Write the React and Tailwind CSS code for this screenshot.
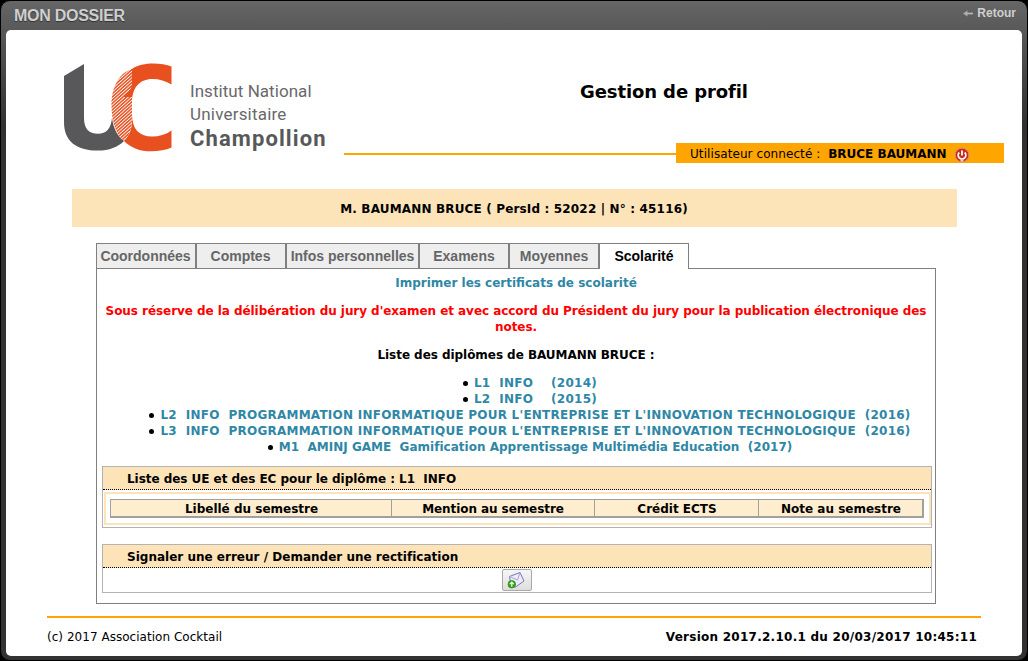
import React from "react";

const tabs = [
  { label: "Coordonnées", cls: "w-[100px] pr-px" },
  { label: "Comptes", cls: "w-[90px] pr-px" },
  { label: "Infos personnelles", cls: "w-[133px]" },
  { label: "Examens", cls: "w-[90px]" },
  { label: "Moyennes", cls: "w-[90px]" },
];

const diplomas = [
  { text: "L1  INFO    (2014)", cls: "tracking-[0.27px]" },
  { text: "L2  INFO    (2015)", cls: "tracking-[0.27px]" },
  { text: "L2  INFO  PROGRAMMATION INFORMATIQUE POUR L'ENTREPRISE ET L'INNOVATION TECHNOLOGIQUE  (2016)", cls: "tracking-[0.24px]" },
  { text: "L3  INFO  PROGRAMMATION INFORMATIQUE POUR L'ENTREPRISE ET L'INNOVATION TECHNOLOGIQUE  (2016)", cls: "tracking-[0.24px]" },
  { text: "M1  AMINJ GAME  Gamification Apprentissage Multimédia Education  (2017)", cls: "tracking-[0.01px]" },
];

function Logo() {
  return (
    <svg className="h-[90px] w-[110px] shrink-0" viewBox="63 63 110 90">
      <defs>
        <pattern id="hatch" width="2.4" height="2.4" patternUnits="userSpaceOnUse" patternTransform="rotate(-42)">
          <rect width="2.4" height="1.5" fill="#e8501f" />
        </pattern>
      </defs>
      <path d="M64 76L84 64V118C84 129 89 133.700 98 133.700C106 133.700 111 129 112 118C113.500 129 118 137 124 141C118 147 109 150.600 98 150.600C76 150.600 64 141 64 122Z" fill="#58585a" />
      <path d="M132 69C137 65 146 63.500 153 63.500C160 63.500 167 64.500 171.500 66.500V84.500C166 81 159 79 152.500 79C139 79 132 88 132 103V114C132 129 139 136.500 152 136.500C159 136.500 166 134.500 171.500 130.500V147.500C166 150 159 151.300 151 151.300C140 151.300 131 148 124 141C129 136 132 130 132 120V97H123C129 92 132 89 132 83Z" fill="#e8501f" />
      <path d="M132 69C119 73 111.500 87 111.500 105C111.500 124 117 136 124 141C130 135 132.500 127 132 114Z" fill="url(#hatch)" />
    </svg>
  );
}

function PowerIcon() {
  return (
    <svg className="ml-[7px] mt-1 size-[16px]" viewBox="0 0 16 16">
      <circle cx="8" cy="8" r="6.800" fill="#cb2a1c" stroke="#d8876a" />
      <path d="M5.300 5.500a3.800 3.800 0 1 0 5.400 0M8 3.500v5" fill="none" stroke="#fff" strokeWidth="1.800" />
      <path d="M8 12v2.500" stroke="#f3cfc6" strokeWidth="3" />
    </svg>
  );
}

function MailIcon() {
  return (
    <svg className="-ml-[2px] size-[18px]" viewBox="0 0 18 18">
      <path d="M2.500 5.500L13 1.500L17 10L8.500 16L4 14Z" fill="#eceafb" stroke="#7a76b8" />
      <path d="M2.500 5.500L10.500 9L13 1.500" fill="none" stroke="#a9a5d8" />
      <circle cx="4.800" cy="13.300" r="3.800" fill="#2fa80e" stroke="#1d7d06" strokeWidth=".6" />
      <path d="M4.800 15.800v-4M2.800 13.200l2-2l2 2" fill="none" stroke="#fff" strokeWidth="1.200" />
    </svg>
  );
}

export default function App() {
  return (
    <div className="h-[661px] w-[1028px] overflow-hidden bg-black font-['DejaVu_Sans',sans-serif] text-[12px] leading-4 text-black">
      <div className="flex h-[661px] flex-col rounded-[10px] border border-black bg-[linear-gradient(#666_0px,#585858_30px,#30302f_128px,#333231_129px)] px-[5px] pb-1">
        <header className="flex h-[29px] shrink-0 justify-between pl-2 pr-[6px] font-['Liberation_Sans',sans-serif] font-bold text-[#cfcfcf]">
          <h1 className="pt-[5px] text-[16px] leading-[20px] tracking-[-0.27px] [text-shadow:0_1px_1px_#333]">MON DOSSIER</h1>
          <div className="flex items-center gap-1 pb-[5px]">
            <svg className="h-[7px] w-[10px]" viewBox="0 0 10 7"><path d="M4.500 .5L0 3.500L4.500 6.500Z" fill="#aaa" /><path d="M3 3.500H10" stroke="#b5b5b5" strokeWidth="1.700" /></svg>
            <span>Retour</span>
          </div>
        </header>

        <main className="flex h-[626px] w-[1016px] flex-col rounded-[5px] bg-white">
          <div className="flex h-[159px] shrink-0">
            <div className="flex pl-[57px] pt-[33px]">
              <Logo />
              <div className="ml-[17px] mt-[16px] w-[148px] whitespace-nowrap font-['Roboto',sans-serif] text-[17px] font-normal leading-6 text-[#69696b]">
                <p className="tracking-[0.05px]">Institut National</p>
                <p className="-mt-px tracking-[0.2px]">Universitaire</p>
                <p className="mt-px text-[22px] font-bold tracking-[1.1px] text-[#58585a]">Champollion</p>
              </div>
            </div>
            <div className="flex flex-1 flex-col">
              <h2 className="ml-[242px] mt-[50px] text-[18px] font-bold leading-6 tracking-[-0.1px]">Gestion de profil</h2>
              <div className="mt-[39px] flex h-5 items-center">
                <div className="ml-[6px] mt-px h-[2px] w-[332px] bg-[#ffa500]" />
                <div className="flex h-5 w-[328px] items-center whitespace-pre bg-[#ffa500] pl-[14px]">
                  <span className="mt-[2px] tracking-[0.08px]">Utilisateur connecté :  </span>
                  <b className="mt-[2px]">BRUCE BAUMANN</b>
                  <PowerIcon />
                </div>
              </div>
            </div>
          </div>

          <div className="ml-[66px] flex h-[38px] w-[885px] shrink-0 items-center justify-center bg-[#fde3b8] pr-px pt-[2px] font-bold tracking-[0.16px]">
            M. BAUMANN BRUCE ( PersId : 52022 | N° : 45116)
          </div>

          <nav className="relative z-10 -mb-px ml-[90px] mt-4 flex h-[26px] shrink-0 font-['Liberation_Sans',sans-serif] text-[14px] font-bold text-[#666]">
            {tabs.map((t) => (
              <a key={t.label} className={`flex items-center justify-center whitespace-nowrap border border-[#808080] bg-[#eee] ${t.cls}`}>{t.label}</a>
            ))}
            <a className="flex w-[90px] items-center justify-center border border-b-0 border-[#808080] bg-white pb-px text-black">Scolarité</a>
          </nav>

          <section className="ml-[90px] flex h-[336px] w-[840px] shrink-0 flex-col border border-[#808080] px-[5px] pt-[6px] text-center font-bold">
            <a className="text-[#2f87a6]">Imprimer les certificats de scolarité</a>
            <p className="mt-3 whitespace-nowrap tracking-[-0.058px] text-[#f00]">Sous réserve de la délibération du jury d'examen et avec accord du Président du jury pour la publication électronique des<br />notes.</p>
            <p className="mt-3 tracking-[-0.05px]">Liste des diplômes de BAUMANN BRUCE :</p>
            <ul className="mt-3 flex flex-col items-center pl-[28px]">
              {diplomas.map((d) => (
                <li key={d.text} className="flex items-center gap-[6px] whitespace-pre">
                  <i className="size-[5px] rounded-full bg-black" />
                  <a className={`text-[#2f87a6] ${d.cls}`}>{d.text}</a>
                </li>
              ))}
            </ul>

            <div className="-mr-[2px] mt-[11px] h-[62px] shrink-0 border border-[#b3b3b3]">
              <h3 className="flex h-[23px] items-center whitespace-pre border-b border-dotted border-black bg-[#fde3b8] pl-6 pt-[2px] tracking-[-0.04px]">Liste des UE et des EC pour le diplôme : L1  INFO</h3>
              <div className="ml-px mt-[2px] h-[33px] border-2 border-[#fde3b8] px-1 pt-[5px]">
                <div className="flex h-[19px] w-[814px] border border-b-2 border-r-2 border-[#a0a0a0] bg-[#ffedd0] leading-[18px]">
                  <span className="w-[280px] pl-px">Libellé du semestre</span>
                  <span className="w-[203px] border-l border-[#a0a0a0] tracking-[-0.08px]">Mention au semestre</span>
                  <span className="w-[164px] border-l border-[#a0a0a0] pl-px">Crédit ECTS</span>
                  <span className="flex-1 border-l border-[#a0a0a0] pl-px">Note au semestre</span>
                </div>
              </div>
            </div>

            <div className="-mr-[2px] mt-4 h-[49px] shrink-0 border border-[#b3b3b3]">
              <h3 className="flex h-[23px] items-center border-b border-dotted border-black bg-[#fde3b8] pl-6 pt-[2px] tracking-[0.01px]">Signaler une erreur / Demander une rectification</h3>
              <button className="mx-auto mt-px flex h-[22px] w-[30px] items-center justify-center rounded-[2px] border border-[#a9a9a9] bg-gradient-to-b from-[#f6f6f6] to-[#dedede]">
                <MailIcon />
              </button>
            </div>
          </section>

          <footer className="ml-[41px] mt-3 w-[934px] border-t-2 border-[#ffa500]">
            <div className="flex justify-between pr-1 pt-[11px]">
              <span className="tracking-[0.03px]">(c) 2017 Association Cocktail</span>
              <b className="tracking-[0.26px]">Version 2017.2.10.1 du 20/03/2017 10:45:11</b>
            </div>
          </footer>
        </main>
      </div>
    </div>
  );
}
